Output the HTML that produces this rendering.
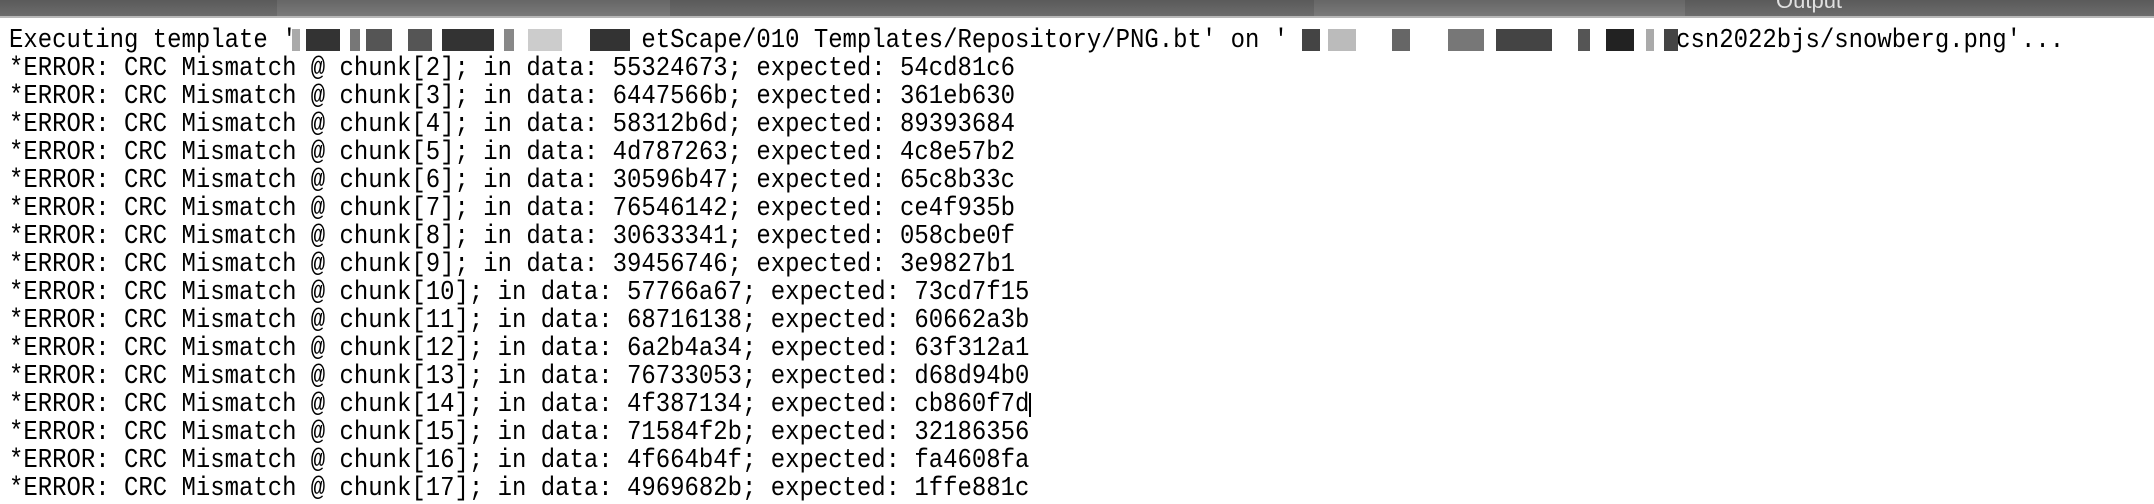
<!DOCTYPE html>
<html><head><meta charset="utf-8"><style>
html,body{margin:0;padding:0;background:#fff;width:2154px;height:504px;overflow:hidden;position:relative}
.hdr{position:absolute;left:0;top:0;width:2154px;height:16px;background:linear-gradient(#5a5a5a,#6c6c6c);border-bottom:2px solid #b8b8b8}
.tab{position:absolute;top:0;height:16px;background:linear-gradient(#666,#7a7a7a)}
.ttl{position:absolute;left:1776px;top:-12px;font:22px "Liberation Sans",sans-serif;color:#e0e0e0}
.ln{position:absolute;left:9px;height:28px;line-height:28px;font:27px "Liberation Mono",monospace;color:#000;white-space:pre;transform:scaleX(0.887);transform-origin:0 0}
.b{position:absolute;top:29px;height:22px}
</style></head><body>
<div class="hdr"></div>
<div class="tab" style="left:277px;width:393px"></div>
<div class="tab" style="left:1314px;width:371px"></div>
<div class="ttl">Output</div>
<div class="ln" style="top:26px">Executing template '                        etScape/010 Templates/Repository/PNG.bt' on '                           csn2022bjs/snowberg.png'...</div>
<div class="b" style="left:292px;width:8px;background:#aaa"></div>
<div class="b" style="left:306px;width:34px;background:#333"></div>
<div class="b" style="left:350px;width:10px;background:#777"></div>
<div class="b" style="left:366px;width:26px;background:#555"></div>
<div class="b" style="left:408px;width:24px;background:#555"></div>
<div class="b" style="left:442px;width:52px;background:#333"></div>
<div class="b" style="left:504px;width:10px;background:#888"></div>
<div class="b" style="left:528px;width:34px;background:#ccc"></div>
<div class="b" style="left:590px;width:40px;background:#333"></div>
<div class="b" style="left:1302px;width:18px;background:#444"></div>
<div class="b" style="left:1328px;width:28px;background:#bbb"></div>
<div class="b" style="left:1392px;width:18px;background:#666"></div>
<div class="b" style="left:1448px;width:36px;background:#777"></div>
<div class="b" style="left:1496px;width:56px;background:#444"></div>
<div class="b" style="left:1578px;width:12px;background:#555"></div>
<div class="b" style="left:1606px;width:28px;background:#222"></div>
<div class="b" style="left:1646px;width:8px;background:#aaa"></div>
<div class="b" style="left:1664px;width:14px;background:#444"></div>
<div class="ln" style="top:54px">*ERROR: CRC Mismatch @ chunk[2]; in data: 55324673; expected: 54cd81c6</div>
<div class="ln" style="top:82px">*ERROR: CRC Mismatch @ chunk[3]; in data: 6447566b; expected: 361eb630</div>
<div class="ln" style="top:110px">*ERROR: CRC Mismatch @ chunk[4]; in data: 58312b6d; expected: 89393684</div>
<div class="ln" style="top:138px">*ERROR: CRC Mismatch @ chunk[5]; in data: 4d787263; expected: 4c8e57b2</div>
<div class="ln" style="top:166px">*ERROR: CRC Mismatch @ chunk[6]; in data: 30596b47; expected: 65c8b33c</div>
<div class="ln" style="top:194px">*ERROR: CRC Mismatch @ chunk[7]; in data: 76546142; expected: ce4f935b</div>
<div class="ln" style="top:222px">*ERROR: CRC Mismatch @ chunk[8]; in data: 30633341; expected: 058cbe0f</div>
<div class="ln" style="top:250px">*ERROR: CRC Mismatch @ chunk[9]; in data: 39456746; expected: 3e9827b1</div>
<div class="ln" style="top:278px">*ERROR: CRC Mismatch @ chunk[10]; in data: 57766a67; expected: 73cd7f15</div>
<div class="ln" style="top:306px">*ERROR: CRC Mismatch @ chunk[11]; in data: 68716138; expected: 60662a3b</div>
<div class="ln" style="top:334px">*ERROR: CRC Mismatch @ chunk[12]; in data: 6a2b4a34; expected: 63f312a1</div>
<div class="ln" style="top:362px">*ERROR: CRC Mismatch @ chunk[13]; in data: 76733053; expected: d68d94b0</div>
<div class="ln" style="top:390px">*ERROR: CRC Mismatch @ chunk[14]; in data: 4f387134; expected: cb860f7d</div>
<div style="position:absolute;left:1029px;top:393px;width:2px;height:24px;background:#000"></div>
<div class="ln" style="top:418px">*ERROR: CRC Mismatch @ chunk[15]; in data: 71584f2b; expected: 32186356</div>
<div class="ln" style="top:446px">*ERROR: CRC Mismatch @ chunk[16]; in data: 4f664b4f; expected: fa4608fa</div>
<div class="ln" style="top:474px">*ERROR: CRC Mismatch @ chunk[17]; in data: 4969682b; expected: 1ffe881c</div>
</body></html>
